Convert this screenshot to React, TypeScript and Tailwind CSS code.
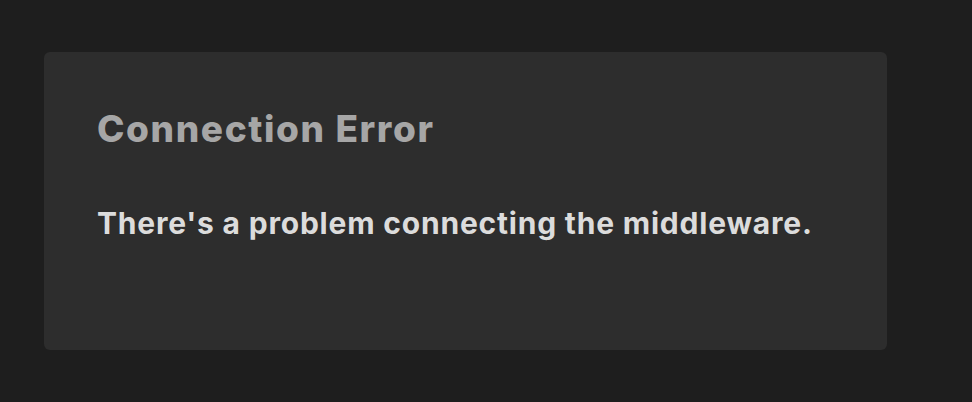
export default function App() {
  return (
    <div
      className="min-h-[402px] w-full bg-[#1e1e1e] pl-[44px] pt-[52px]"
      style={{ fontFamily: "Inter, 'Noto Sans', sans-serif" }}
    >
      <div className="w-[843px] h-[298px] rounded-md bg-[#2d2d2d] px-[53px] pt-[52px]">
        <h1 className="text-[37px] leading-[50px] font-extrabold tracking-[1.6px] text-[#a6a6a6]">
          Connection Error
        </h1>
        <p className="mt-[51px] text-[30px] leading-[36px] font-bold tracking-[0.8px] text-[#dcdcdc]">
          There's a problem connecting the middleware.
        </p>
      </div>
    </div>
  );
}
